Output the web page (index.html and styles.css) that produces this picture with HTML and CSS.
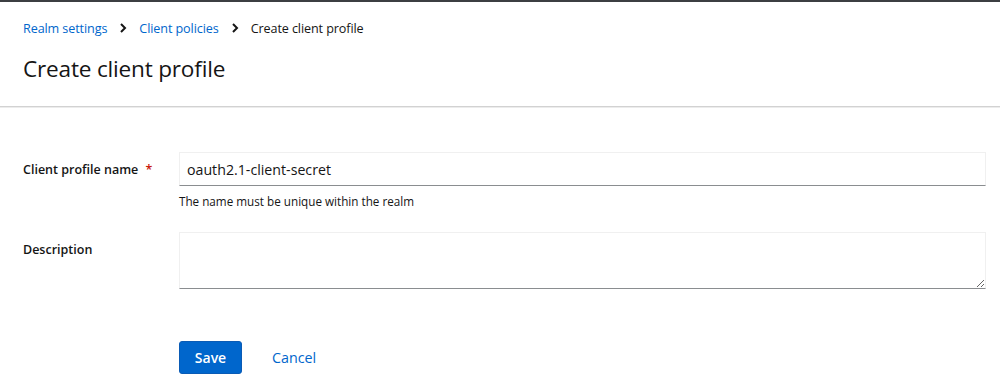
FILE: index.html
```html
<!DOCTYPE html>
<html>
<head>
<meta charset="utf-8">
<link rel="stylesheet" href="styles.css">
</head>
<body>
<div class="page">
  <section class="header">
    <nav class="breadcrumb">
      <a class="crumb-link">Realm settings</a>
      <svg class="sep" viewBox="0 0 8 10" width="8" height="10"><path d="M2 1 L6 5 L2 9" fill="none" stroke="#151515" stroke-width="2"/></svg>
      <a class="crumb-link">Client policies</a>
      <svg class="sep" viewBox="0 0 8 10" width="8" height="10"><path d="M2 1 L6 5 L2 9" fill="none" stroke="#151515" stroke-width="2"/></svg>
      <span class="crumb-current">Create client profile</span>
    </nav>
    <h1 class="title">Create client profile</h1>
  </section>
  <section class="form">
    <div class="row">
      <label class="label">Client profile name <span class="req">*</span></label>
      <div class="control">
        <input class="input" type="text" value="oauth2.1-client-secret">
        <div class="helper">The name must be unique within the realm</div>
      </div>
    </div>
    <div class="row row-desc">
      <label class="label">Description</label>
      <div class="control">
        <textarea class="textarea"></textarea>
      </div>
    </div>
    <div class="actions">
      <button class="btn-primary">Save</button>
      <button class="btn-link">Cancel</button>
    </div>
  </section>
</div>
</body>
</html>
```
FILE: styles.css
```css
* { box-sizing: border-box; }
html, body { margin: 0; padding: 0; background: #fff; }
body {
  font-family: "Open Sans", "Noto Sans", sans-serif;
  color: #151515;
  border-top: 2px solid #3c3f42;
}
.header {
  padding: 15px 23px 0;
  height: 105px;
  border-bottom: 1px solid #d2d2d2;
  box-shadow: 0 1px 0 #ececec;
}
.breadcrumb {
  display: flex;
  align-items: center;
  gap: 12px;
  font-size: 12.6px;
  letter-spacing: -0.1px;
  height: 22px;
}
.crumb-link { color: #0066cc; text-decoration: none; }
.crumb-current { color: #151515; }
.sep { display: block; }
.title {
  margin: 15px 0 0;
  font-size: 22.6px;
  font-weight: 400;
  line-height: 30px;
  letter-spacing: -0.2px;
}
.form {
  padding: 45px 14px 0 23px;
}
.row {
  display: grid;
  grid-template-columns: 156px 807px;
  align-items: start;
}
.label {
  font-size: 12.5px;
  font-weight: 600;
  padding-top: 9px;
}
.req { color: #c9190b; margin-left: 4px; }
.input {
  display: block;
  width: 100%;
  height: 34px;
  border: 1px solid #f0f0f0;
  border-bottom: 1px solid #8a8d90;
  padding: 0 7px;
  font-family: inherit;
  font-size: 14.2px;
  color: #151515;
  outline: none;
}
.helper {
  font-size: 11.7px;
  margin-top: 7px;
  line-height: 16px;
}
.row-desc { margin-top: 23px; }
.row-desc .label { padding-top: 9px; }
.textarea {
  display: block;
  width: 100%;
  height: 57px;
  border: 1px solid #f0f0f0;
  border-bottom: 1px solid #8a8d90;
  font-family: inherit;
  resize: vertical;
  outline: none;
}
.actions {
  display: flex;
  align-items: center;
  gap: 14px;
  margin-top: 52px;
  margin-left: 156px;
}
.btn-primary {
  background: #0066cc;
  color: #fff;
  border: 1px solid #0a5bb5;
  border-radius: 3px;
  height: 33px;
  width: 63px;
  font-family: inherit;
  font-size: 14px;
  font-weight: 600;
  padding: 0;
}
.btn-link {
  background: none;
  border: none;
  color: #0066cc;
  font-family: inherit;
  font-size: 14.3px;
  padding: 0 16px;
  height: 33px;
}
```
